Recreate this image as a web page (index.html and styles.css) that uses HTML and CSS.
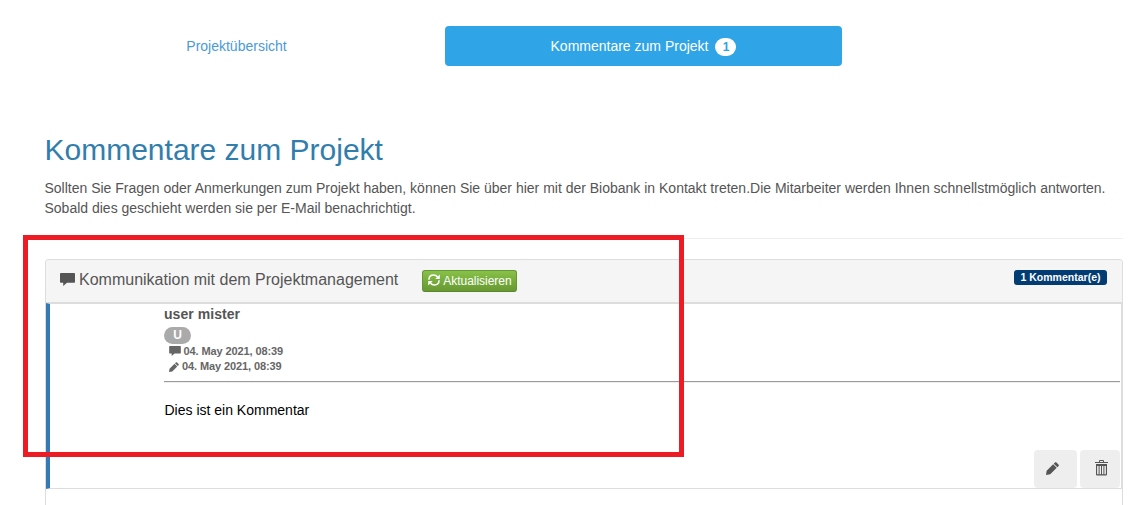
FILE: index.html
```html
<!DOCTYPE html>
<html lang="de">
<head>
<meta charset="utf-8">
<title>Kommentare zum Projekt</title>
<link rel="stylesheet" href="styles.css">
</head>
<body>
<svg class="symbols" aria-hidden="true">
  <symbol id="comment" viewBox="0 0 14 12"><path d="M.7 0H13.3Q14 0 14 .8V8.2Q14 9 13.3 9H6.5L3 12V9H.7Q0 9 0 8.2V.8Q0 0 .7 0Z"/></symbol>
  <symbol id="pencil" viewBox="0 0 12 12"><path d="M0 12L.6 8.1 6.6 2.1 9.9 5.4 3.9 11.4ZM7.2 1.5L8.4.3Q8.9 0 9.4.3L11.7 2.6Q12 3.1 11.7 3.6L10.5 4.8Z"/></symbol>
  <symbol id="refresh" viewBox="0 0 12 12"><path d="M.9 5.7C1 2.7 3 1.1 5.6 1.1 7.3 1.1 8.6 1.8 9.5 3M11.1 6.3C11 9.3 9 10.9 6.4 10.9 4.7 10.9 3.4 10.2 2.5 9" fill="none" stroke="currentColor" stroke-width="1.5"/><path d="M11.8.4V5H7.2ZM.2 11.6V7H4.8Z"/></symbol>
  <symbol id="trash" viewBox="0 0 13 16"><path d="M4 2V1Q4 0 5 0H8Q9 0 9 1V2H13V3H0V2ZM5 2H8V1H5ZM1 4H12V14.5Q12 15.5 11 15.5H2Q1 15.5 1 14.5ZM2.1 6V14.3H3.6V6ZM4.6 6V14.3H6V6ZM7 6V14.3H8.4V6ZM9.4 6V14.3H10.9V6Z" fill-rule="evenodd"/></symbol>
</svg>
<nav class="tabs">
  <a class="tab">Projektübersicht</a>
  <a class="tab active">Kommentare zum Projekt <span class="count">1</span></a>
</nav>
<main class="content">
  <h2 class="title">Kommentare zum Projekt</h2>
  <p class="intro">Sollten Sie Fragen oder Anmerkungen zum Projekt haben, können Sie über hier mit der Biobank in Kontakt treten.Die Mitarbeiter werden Ihnen schnellstmöglich antworten.<br>Sobald dies geschieht werden sie per E-Mail benachrichtigt.</p>
  <hr class="divider">
  <section class="panel">
    <header class="panel-head">
      <svg class="icon head-icon"><use href="#comment"/></svg>
      <h3 class="panel-title">Kommunikation mit dem Projektmanagement</h3>
      <button class="refresh"><svg class="icon refresh-icon"><use href="#refresh"/></svg><span>Aktualisieren</span></button>
      <span class="label">1 Kommentar(e)</span>
    </header>
    <article class="comment">
      <div class="comment-body">
        <h4 class="author">user mister</h4>
        <span class="initial">U</span>
        <div class="meta"><svg class="icon meta-comment"><use href="#comment"/></svg>04. May 2021, 08:39</div>
        <div class="meta"><svg class="icon meta-pencil"><use href="#pencil"/></svg>04. May 2021, 08:39</div>
        <hr class="rule">
        <p class="text">Dies ist ein Kommentar</p>
      </div>
      <div class="actions">
        <button class="action edit" aria-label="Bearbeiten"><svg class="icon edit-icon"><use href="#pencil"/></svg></button>
        <button class="action delete" aria-label="Löschen"><svg class="icon trash-icon"><use href="#trash"/></svg></button>
      </div>
    </article>
  </section>
</main>
<div class="highlight"></div>
</body>
</html>
```
FILE: styles.css
```css
* { box-sizing: border-box; }
body { margin: 0; position: relative; background: #fff; color: #555; font: 14px/20px "Liberation Sans", Arial, sans-serif; }
h2, h3, h4, p { margin: 0; font-weight: normal; }
button { font-family: inherit; }
.symbols { display: none; }
.icon { display: block; flex: none; fill: currentColor; }

.tabs { display: flex; gap: 20px; padding: 26px 0 0 48px; }
.tab { display: flex; align-items: center; justify-content: center; width: 377px; height: 40px; border-radius: 4px; color: #4a9ad8; white-space: nowrap; }
.tab.active { width: 397px; background: #2fa4e7; color: #fff; }
.count { width: 21px; height: 18px; margin: 1px 0 0 7px; border-radius: 10px; background: #fff; color: #2fa4e7; font-size: 12px; font-weight: bold; line-height: 18px; text-align: center; }

.content { padding: 67px 19px 0 44.5px; }
.title { color: #317eac; font-size: 30px; line-height: 33px; white-space: nowrap; }
.intro { margin-top: 12px; letter-spacing: -0.003px; white-space: nowrap; }
.divider { margin: 20px 0 20px .5px; border: 0; border-top: 1px solid #eee; }

.panel { width: 1078px; height: 246px; margin-left: .5px; border: 1px solid #ddd; border-bottom: 0; border-radius: 4px 4px 0 0; }
.panel-head { display: flex; align-items: flex-start; height: 43px; padding: 10px 15px 10px 14px; border-bottom: 1px solid #ddd; border-radius: 3px 3px 0 0; background: #f5f5f5; }
.head-icon { width: 15px; height: 13px; margin-top: 3px; }
.panel-title { margin-left: 4px; font-size: 16px; line-height: 20px; white-space: nowrap; }
.refresh { display: flex; align-items: center; gap: 3px; width: 95px; height: 22px; margin-left: 24px; padding: 0 5px; border: 1px solid #669533; border-bottom-color: #5b862b; border-radius: 3px; background: linear-gradient(#88c149, #73a839 60%, #699934); color: #fff; font-size: 12px; letter-spacing: -0.03px; white-space: nowrap; }
.refresh-icon { width: 12px; height: 12px; margin-top: -2px; }
.label { width: 93px; height: 15px; margin-left: auto; border-radius: 3px; background: #033c73; color: #fff; font-size: 10.5px; font-weight: bold; line-height: 15px; text-align: center; white-space: nowrap; }

.comment { display: flex; flex-direction: column; justify-content: space-between; height: 186px; border: 1px solid #ddd; border-left: 4px solid #337ab7; }
.comment-body { padding-left: 114px; padding-right: 1px; }
.author { font-size: 14px; font-weight: bold; line-height: 20px; letter-spacing: .05px; }
.initial { display: block; width: 27px; height: 17px; margin: 3px 0 0; border-radius: 9px; background: #aaa; color: #fff; font-size: 12px; font-weight: bold; line-height: 17px; text-align: center; }
.meta { display: flex; align-items: center; height: 15px; padding-left: 5px; color: #666; font-size: 11px; font-weight: bold; line-height: 15px; letter-spacing: -0.1px; }
.meta-comment { width: 12px; height: 10px; margin: -2px 2.5px 0 0; }
.meta-pencil { width: 10px; height: 10px; margin-right: 3px; }
.rule { margin: 7px 0 17px; border: 0; border-top: 1px solid #9a9a9a; border-bottom: 1px solid #eee; }
.text { color: #000; padding-left: .5px; }
.actions { display: flex; justify-content: flex-end; gap: 3px; padding-right: 1px; }
.action { display: flex; align-items: center; height: 38px; padding: 0; border: 0; border-radius: 4px; background: #eee; color: #555; }
.edit { width: 43px; padding-left: 12px; }
.delete { width: 40px; padding-left: 15px; }
.edit-icon { width: 13px; height: 13px; margin-top: -1px; }
.trash-icon { width: 13px; height: 16px; margin-top: -2px; }

/* Annotation frame drawn over the page */
.highlight { position: absolute; left: 23px; top: 235px; width: 661px; height: 222px; border: 5px solid #ed1c24; }
```
